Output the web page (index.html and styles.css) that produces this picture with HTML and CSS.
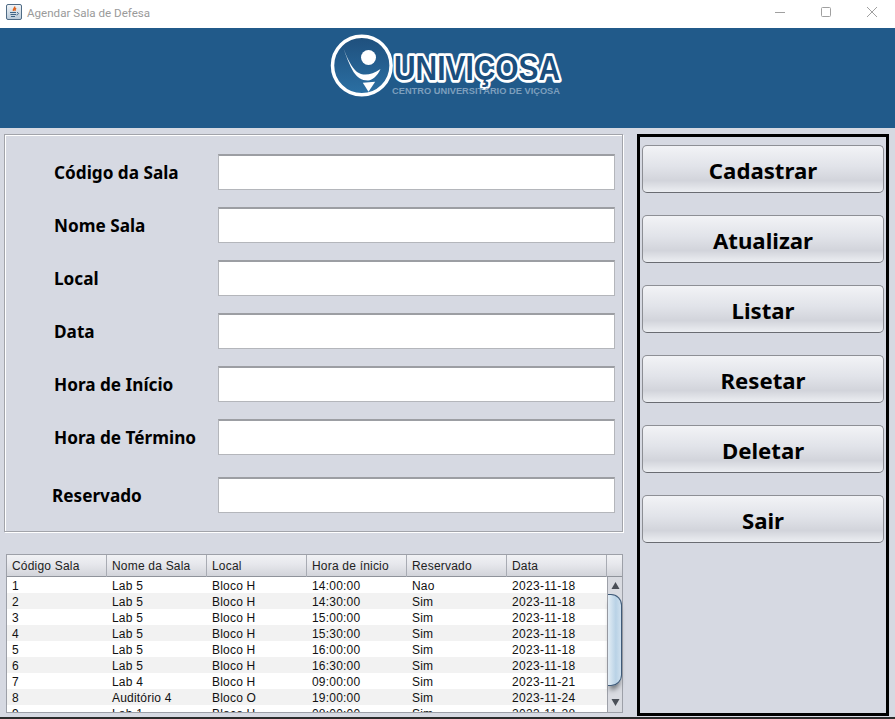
FILE: index.html
```html
<!DOCTYPE html>
<html lang="pt">
<head>
<meta charset="utf-8">
<title>Agendar Sala de Defesa</title>
<link rel="stylesheet" href="styles.css">
</head>
<body>
<div class="window">
  <div class="titlebar">
    <svg class="java-icon" width="16" height="16" viewBox="0 0 16 16">
      <defs><linearGradient id="jv" x1="0" y1="0" x2="0" y2="1"><stop offset="0" stop-color="#f2f5f8"/><stop offset="1" stop-color="#b9cad9"/></linearGradient></defs>
      <rect x="0.5" y="0.5" width="15" height="15" rx="1.5" fill="url(#jv)" stroke="#4f6b85"/>
      <path d="M8.5 2.5c1 1.5-2 2.5-1 4.500M10 4c-1 1-1.500 1.500-.8 3" fill="none" stroke="#e2631b" stroke-width="1.400"/>
      <path d="M4 8.500h6M4.500 10.500h5.500M5 12.500h4" stroke="#3f6484" stroke-width="1"/>
      <path d="M11 8.500c2 0 2 2-.5 2.500" fill="none" stroke="#3f6484"/>
    </svg>
    <span class="title-text">Agendar Sala de Defesa</span>
    <div class="win-controls">
      <svg width="10" height="10" viewBox="0 0 10 10"><path d="M0 5.500h10" stroke="#a0a0a0"/></svg>
      <svg width="10" height="10" viewBox="0 0 10 10"><rect x="0.500" y="0.500" width="9" height="9" rx="1" fill="none" stroke="#a0a0a0"/></svg>
      <svg width="10" height="10" viewBox="0 0 10 10"><path d="M0 0l10 10M10 0L0 10" stroke="#a0a0a0"/></svg>
    </div>
  </div>
  <header class="banner">
    <svg class="logo" width="240" height="70" viewBox="0 0 240 70">
      <defs>
        <linearGradient id="disc" x1="0" y1="0" x2="0" y2="1">
          <stop offset="0" stop-color="#1f4f7c"/><stop offset="1" stop-color="#2b70a4"/>
        </linearGradient>
      </defs>
      <circle cx="31.800" cy="34.500" r="29.300" fill="url(#disc)" stroke="#fff" stroke-width="3.500"/>
      <circle cx="38.500" cy="26.500" r="7.500" fill="#fff"/>
      <path d="M13.500 17.500C17.500 28 21.500 36 27 41c6 4 14 3.500 23.500-3-3 7-8 11-12.500 11.500C31.500 49.500 27 46 23.500 41 19.500 34 16 25 13.500 17.500z" fill="#fff"/>
      <path d="M32.800 51.700l12.400-1L38.500 60.700z" fill="#fff"/>
      <text class="logo-main" x="64" y="49" textLength="166" lengthAdjust="spacingAndGlyphs">UNIVIÇOSA</text>
      <text class="logo-sub" x="62" y="63" textLength="168" lengthAdjust="spacingAndGlyphs">CENTRO UNIVERSITÁRIO DE VIÇOSA</text>
    </svg>
  </header>
  <main class="content">
    <div class="left">
      <form class="form-panel">
        <div class="field-row"><label class="field-label">Código da Sala</label><input class="field" type="text"></div>
        <div class="field-row"><label class="field-label">Nome Sala</label><input class="field" type="text"></div>
        <div class="field-row"><label class="field-label">Local</label><input class="field" type="text"></div>
        <div class="field-row"><label class="field-label">Data</label><input class="field" type="text"></div>
        <div class="field-row"><label class="field-label">Hora de Início</label><input class="field" type="text"></div>
        <div class="field-row"><label class="field-label">Hora de Término</label><input class="field" type="text"></div>
        <div class="field-row last"><label class="field-label reserved">Reservado</label><input class="field" type="text"></div>
      </form>
      <div class="table-box">
        <div class="thead">
          <div class="th">Código Sala</div><div class="th">Nome da Sala</div><div class="th">Local</div><div class="th">Hora de ínicio</div><div class="th">Reservado</div><div class="th">Data</div><div class="th corner"></div>
        </div>
        <div class="tbody-wrap">
          <div class="rows">
            <div class="tr"><span>1</span><span>Lab 5</span><span>Bloco H</span><span>14:00:00</span><span>Nao</span><span>2023-11-18</span></div>
            <div class="tr"><span>2</span><span>Lab 5</span><span>Bloco H</span><span>14:30:00</span><span>Sim</span><span>2023-11-18</span></div>
            <div class="tr"><span>3</span><span>Lab 5</span><span>Bloco H</span><span>15:00:00</span><span>Sim</span><span>2023-11-18</span></div>
            <div class="tr"><span>4</span><span>Lab 5</span><span>Bloco H</span><span>15:30:00</span><span>Sim</span><span>2023-11-18</span></div>
            <div class="tr"><span>5</span><span>Lab 5</span><span>Bloco H</span><span>16:00:00</span><span>Sim</span><span>2023-11-18</span></div>
            <div class="tr"><span>6</span><span>Lab 5</span><span>Bloco H</span><span>16:30:00</span><span>Sim</span><span>2023-11-18</span></div>
            <div class="tr"><span>7</span><span>Lab 4</span><span>Bloco H</span><span>09:00:00</span><span>Sim</span><span>2023-11-21</span></div>
            <div class="tr"><span>8</span><span>Auditório 4</span><span>Bloco O</span><span>19:00:00</span><span>Sim</span><span>2023-11-24</span></div>
            <div class="tr"><span>9</span><span>Lab 1</span><span>Bloco H</span><span>08:00:00</span><span>Sim</span><span>2023-11-28</span></div>
          </div>
          <div class="scrollbar">
            <svg class="arrow" width="15" height="17" viewBox="0 0 15 17"><path d="M3.500 12l4-7 4 7z" fill="#4a4f57"/></svg>
            <div class="track"><div class="thumb"></div></div>
            <svg class="arrow" width="15" height="17" viewBox="0 0 15 17"><path d="M3.500 4l4 7 4-7z" fill="#4a4f57"/></svg>
          </div>
        </div>
      </div>
    </div>
    <aside class="actions">
      <button class="btn" type="button">Cadastrar</button>
      <button class="btn" type="button">Atualizar</button>
      <button class="btn" type="button">Listar</button>
      <button class="btn" type="button">Resetar</button>
      <button class="btn" type="button">Deletar</button>
      <button class="btn" type="button">Sair</button>
    </aside>
  </main>
</div>
</body>
</html>
```
FILE: styles.css
```css
* { box-sizing: border-box; }
html, body { margin: 0; padding: 0; }
body { width: 895px; height: 719px; overflow: hidden; background: #d6d9e2; font-family: "Liberation Sans", Arial, sans-serif; }
.window { display: flex; flex-direction: column; height: 719px; border-bottom: 2px solid #2b2b2b; }

.titlebar { flex: none; height: 28px; background: #fff; display: flex; align-items: center; padding: 0 0 4px 6px; }
.java-icon { flex: none; margin-right: 5px; }
.title-text { font-family: Roboto, "Open Sans", sans-serif; font-size: 11.600px; color: #9a9a9a; white-space: nowrap; margin-top: 2px; }
.win-controls { margin-left: auto; display: flex; gap: 36px; padding-right: 18px; align-items: center; }
.win-controls svg { display: block; }

.banner { flex: none; height: 100px; background: #215a8a; display: flex; justify-content: center; padding: 3px 0 0 5px; }
.logo { display: block; }
.logo-main { font-family: "Liberation Sans", sans-serif; font-weight: 700; font-size: 35px; fill: #1a4e7d; stroke: #fff; stroke-width: 5.500px; paint-order: stroke; stroke-linejoin: round; }
.logo-sub { font-family: "Liberation Sans", sans-serif; font-weight: 700; font-size: 9px; fill: #7d9fbd; }

.content { flex: 1; min-height: 0; display: flex; align-items: flex-start; padding: 6px 6px 0 4px; gap: 14px; }
.left { width: 619px; flex: none; display: flex; flex-direction: column; gap: 22px; }

.form-panel { height: 398px; border: 1px solid #a2a4aa; box-shadow: inset 1px 1px 0 #fff, 1px 1px 0 #fff; padding: 19px 7px 0 0; display: flex; flex-direction: column; gap: 17px; }
.field-row { display: flex; align-items: center; height: 36px; flex: none; }
.field-row.last { margin-top: 5px; }
.field-label { width: 213px; padding-left: 49px; flex: none; font-family: "Noto Sans", sans-serif; font-weight: 700; font-size: 17.200px; color: #000; white-space: nowrap; }
.field-label.reserved { padding-left: 47px; }
.field { flex: 1; height: 36px; min-width: 0; background: #fff; border: 1px solid #b4b6bb; border-top: 2px solid #9c9ea3; border-radius: 0; padding: 0; outline: none; }

.table-box { margin-left: 2px; width: 617px; height: 159px; border: 1px solid #9da0a8; background: #fff; display: flex; flex-direction: column; font-size: 12px; letter-spacing: .2px; color: #111; }
.thead { flex: none; height: 22px; display: grid; grid-template-columns: repeat(6, 100px) 1fr; background: linear-gradient(#f1f2f5, #e6e7ec 45%, #d2d4da); border-bottom: 1px solid #8f939b; }
.th { padding-left: 5px; line-height: 23px; border-right: 1px solid #a8abb3; white-space: nowrap; color: #222; }
.th.corner { border-right: 0; }
.tbody-wrap { flex: 1; min-height: 0; display: flex; }
.rows { flex: 1; min-width: 0; overflow: hidden; }
.tr { height: 16px; display: grid; grid-template-columns: repeat(6, 100px); line-height: 19px; background: #fff; }
.tr:nth-child(even) { background: #f2f2f2; }
.tr span { padding-left: 5px; white-space: nowrap; }
.tr span:last-child { letter-spacing: .3px; }
.scrollbar { flex: none; width: 15px; background: #d9dbe1; border-left: 1px solid #9da0a8; display: flex; flex-direction: column; }
.arrow { flex: none; display: block; }
.track { flex: 1; min-height: 0; }
.thumb { height: 92px; border: 1px solid #3f5a78; border-left: 0; border-radius: 0 11px 11px 0; background: linear-gradient(90deg, #e3edf5, #b9d2e6 60%, #cfe0ee); box-shadow: 0 6px 5px -2px #6f7378; }

.actions { width: 252px; height: 582px; flex: none; border: 3px solid #000; padding: 8px 2px 0; display: flex; flex-direction: column; gap: 22px; }
.btn { flex: none; width: 242px; height: 48px; padding: 2px 0 0; border: 1px solid #8d8f95; border-bottom-color: #6a6c72; border-radius: 5px; background: linear-gradient(#f2f3f6, #e1e3e9 45%, #d2d4db 75%, #eceef2); font-family: "Noto Sans", sans-serif; font-weight: 700; font-size: 22.200px; color: #000; }
```
